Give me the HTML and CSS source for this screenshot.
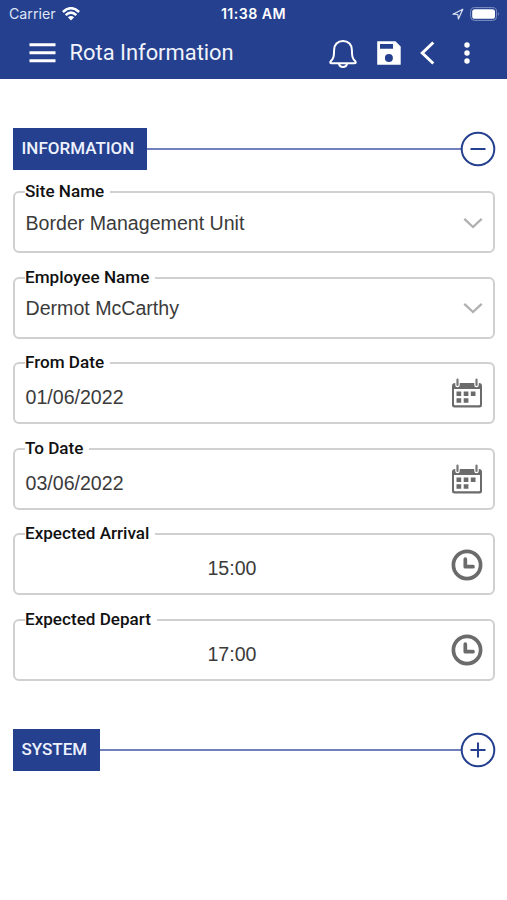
FILE: index.html
```html
<!DOCTYPE html>
<html lang="en">
<head>
<meta charset="utf-8">
<title>Rota Information</title>
<link rel="stylesheet" href="styles.css">
</head>
<body>
<svg width="0" height="0" class="defs">
  <symbol id="chevron" viewBox="0 0 20 12"><path d="M1.300 1.800L10 10L18.700 1.800" fill="none" stroke="#b0b0b0" stroke-width="2.300"/></symbol>
  <symbol id="calendar" viewBox="0 0 32 30">
    <path d="M4 5H28Q31 5 31 8V27Q31 29.500 28.500 29.500H3.500Q1 29.500 1 27V8Q1 5 4 5ZM3 11V26.500Q3 27.300 4 27.300H28Q29 27.300 29 26.500V11Z" fill="#6b6b6b" fill-rule="evenodd"/>
    <path d="M6.500 1V7M25.500 1V7" stroke="#fff" stroke-width="4.500" stroke-linecap="round"/>
    <path d="M6.500 1.500V7M25.500 1.500V7" stroke="#777" stroke-width="2.200" stroke-linecap="round"/>
    <path d="M5.500 13.500h4.700v4.500h-4.700zM12.700 13.500h4.700v4.500h-4.700zM19.800 13.500h4.700v4.500h-4.700zM5.500 20.300h4.700v4.500h-4.700zM12.700 20.300h4.700v4.500h-4.700z" fill="#6b6b6b"/>
  </symbol>
  <symbol id="clock" viewBox="0 0 32 32"><circle cx="16" cy="16" r="13.600" fill="none" stroke="#6b6b6b" stroke-width="3.700"/><path d="M14.300 10.200V17.700H22" fill="none" stroke="#6b6b6b" stroke-width="3.700" stroke-linecap="round" stroke-linejoin="round"/></symbol>
</svg>
<header class="header">
  <div class="status">
    <div class="carrier"><span>Carrier</span>
      <svg width="18" height="14" viewBox="0 0 18 14"><g fill="none" stroke="#fff" stroke-width="2.500"><path d="M.9 5Q9-2.600 17.100 5"/><path d="M3.700 8.100Q9 3.100 14.300 8.100"/></g><path d="M5.900 10.300Q9 7.700 12.100 10.300L9 13.500Z" fill="#fff"/></svg>
    </div>
    <div class="clock">11:38 AM</div>
    <div class="power">
      <svg width="12" height="12" viewBox="0 0 12 12"><path d="M1 6.200L10.800 1.200L6.400 11L5.800 6.500Z" fill="none" stroke="#dce3f7" stroke-width="1.200" stroke-linejoin="round"/></svg>
      <svg width="30" height="14" viewBox="0 0 30 14"><rect x=".6" y=".6" width="26" height="12.800" rx="4" fill="none" stroke="#7f90c4" stroke-width="1"/><rect x="2.200" y="2.200" width="22.800" height="9.600" rx="2.600" fill="#fff"/><path d="M28 4.800Q29.800 7 28 9.200Z" fill="#7f90c4"/></svg>
    </div>
  </div>
  <div class="bar">
    <svg class="menu" width="27" height="20" viewBox="0 0 27 20"><path d="M.5 1.700H26.500M.5 9.700H26.500M.5 17.700H26.500" stroke="#fff" stroke-width="2.900"/></svg>
    <h1>Rota Information</h1>
    <svg class="bell" width="28" height="30" viewBox="0 0 28 30"><path d="M14 2C8.500 2 5.100 5.800 5.100 11C5.100 17.500 4.600 19.500 1.700 22.300Q.5 24.200 2.700 24.200H25.300Q27.500 24.200 26.300 22.300C23.400 19.500 22.900 17.500 22.900 11C22.900 5.800 19.500 2 14 2Z" fill="none" stroke="#fff" stroke-width="2"/><path d="M10 24.500Q10.500 28 14 28T18 24.500" fill="none" stroke="#fff" stroke-width="2"/></svg>
    <svg class="save" width="24" height="24" viewBox="0 0 24 24"><path fill="#fff" fill-rule="evenodd" d="M.2.300H18.500L23.700 5.500V23.700H.2ZM3 3V7.800H16V3ZM11.900 13A4 4 0 1 0 11.900 21A4 4 0 1 0 11.900 13Z"/></svg>
    <svg class="back" width="15" height="24" viewBox="0 0 15 24"><path d="M13.300 1.500L2.300 12L13.300 22.500" fill="none" stroke="#fff" stroke-width="3"/></svg>
    <svg class="more" width="6" height="22" viewBox="0 0 6 22"><g fill="#fff"><circle cx="3" cy="3" r="2.700"/><circle cx="3" cy="11" r="2.700"/><circle cx="3" cy="19" r="2.700"/></g></svg>
  </div>
</header>
<main>
  <div class="section"><h2>INFORMATION</h2><span class="rule"></span>
    <svg width="36" height="36" viewBox="0 0 36 36"><circle cx="18" cy="18" r="16.300"/><path d="M10.500 18H25.500"/></svg></div>
  <div class="fields">
    <fieldset><legend>Site Name</legend><div class="row"><span>Border Management Unit</span><svg class="chev"><use href="#chevron"/></svg></div></fieldset>
    <fieldset><legend>Employee Name</legend><div class="row"><span>Dermot McCarthy</span><svg class="chev"><use href="#chevron"/></svg></div></fieldset>
    <fieldset><legend>From Date</legend><div class="row date"><span>01/06/2022</span><svg class="cal"><use href="#calendar"/></svg></div></fieldset>
    <fieldset><legend>To Date</legend><div class="row date"><span>03/06/2022</span><svg class="cal"><use href="#calendar"/></svg></div></fieldset>
    <fieldset><legend>Expected Arrival</legend><div class="row date time"><span>15:00</span><svg class="clk"><use href="#clock"/></svg></div></fieldset>
    <fieldset><legend>Expected Depart</legend><div class="row date time"><span>17:00</span><svg class="clk"><use href="#clock"/></svg></div></fieldset>
  </div>
  <div class="section system"><h2>SYSTEM</h2><span class="rule"></span>
    <svg width="36" height="36" viewBox="0 0 36 36"><circle cx="18" cy="18" r="16.300"/><path d="M10.500 18H25.500M18 10.500V25.500"/></svg></div>
</main>
</body>
</html>
```
FILE: styles.css
```css
* { box-sizing: border-box; }
body { margin: 0; background: #fff; font-family: Roboto, sans-serif; color: #111; }
svg { display: block; flex: none; }
.defs { position: absolute; }
.header { height: 79px; background: #24408e; color: #fff; }
.status { height: 27px; display: grid; grid-template-columns: 1fr auto 1fr; align-items: center; padding: 0 7px 0 9px; font-family: Inter, sans-serif; font-size: 14.2px; }
.carrier { display: flex; align-items: center; gap: 6px; color: #dfe5f7; }
.clock { font-weight: 600; font-size: 14.2px; letter-spacing: .45px; margin-right: 2px; }
.power { display: flex; justify-content: flex-end; align-items: center; gap: 6px; }
.status .power { margin-left: -2px; }
.bar { height: 51px; display: flex; align-items: center; padding: 0 37px 0 29px; }
h1 { margin: 0 auto 0 13.500px; font-size: 21.900px; font-weight: 400; line-height: 28px; white-space: nowrap; color: #f0f3fc; }
.bell { margin-right: 20px; margin-top: 3px; }
.save { margin-right: 19px; }
.back { margin-right: 29px; }
main { padding: 49px 12px 0 13px; }
.section { height: 42px; display: flex; align-items: center; }
h2 { margin: 0; height: 42px; line-height: 41px; padding: 0 12.5px 0 8.500px; background: #24408e; color: #eef2ff; font-size: 17px; font-weight: 500; }
.rule { flex: 1; height: 2px; background: #7080ba; margin-right: -1px; }
.section svg { margin-right: -1px; fill: none; stroke: #24408e; stroke-width: 2; }
.fields { padding-top: 13px; display: grid; gap: 15.5px; }
fieldset { min-width: 0; height: 70px; margin: 0; padding: 0 10px; border: 2px solid #d0d0d0; border-radius: 6px; }
legend { height: 18px; line-height: 16px; padding: 0 6px 0 0; font-size: 17.100px; font-weight: 500; white-space: nowrap; }
.row { height: 43px; display: flex; align-items: center; justify-content: space-between; font-family: "Liberation Sans", sans-serif; font-size: 19.6px; line-height: 24px; color: #3b3b3b; }
.row span { padding-left: .5px; }
.date { height: 50px; }
.chev { width: 20px; height: 12px; }
.cal { width: 32px; height: 30px; margin-bottom: 8px; }
.clk { width: 32px; height: 32px; margin-bottom: 7px; }
.time span { flex: 1; text-align: center; padding: 0 12px 0 0; }
.system { margin-top: 48px; }
```
